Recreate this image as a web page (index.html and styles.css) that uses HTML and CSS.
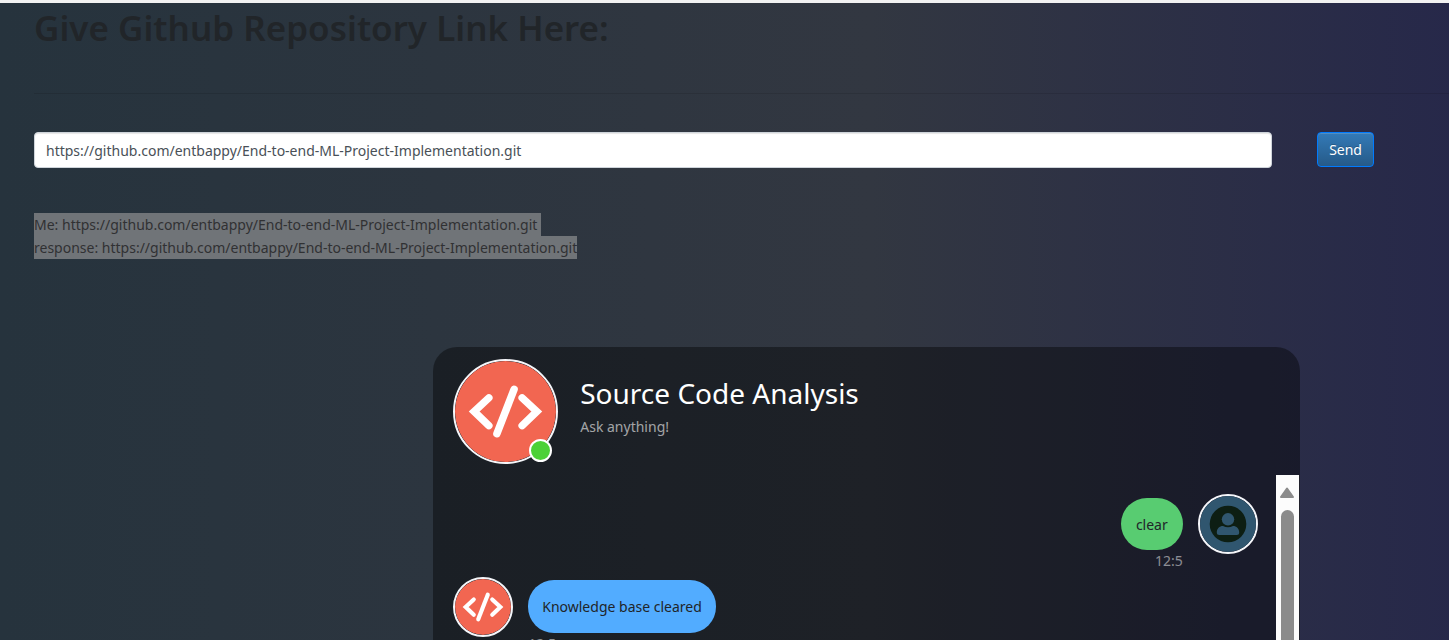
FILE: index.html
```html
<!DOCTYPE html>
<html lang="en">
<head>
<meta charset="utf-8">
<meta name="viewport" content="width=device-width, initial-scale=1">
<title>Source Code Analysis</title>
<link rel="stylesheet" href="styles.css">
</head>
<body>
<svg class="symbols" aria-hidden="true">
  <symbol id="code" viewBox="0 0 100 100">
    <circle cx="50" cy="50" r="50" fill="#f26651"/>
    <g fill="none" stroke="#fff" stroke-width="7.4" stroke-linecap="round">
      <path d="M33.5 36.500 19 50l14.500 14"/>
      <path d="M66.5 36.500 81 50l-14.500 14"/>
      <path d="M58.500 28 41.500 72"/>
    </g>
  </symbol>
</svg>
<main class="page">
  <section class="repo">
    <h1 class="repo-title">Give Github Repository Link Here:</h1>
    <hr class="divider">
    <form class="repo-form">
      <input class="repo-input" type="text" aria-label="Repository link" value="https://github.com/entbappy/End-to-end-ML-Project-Implementation.git">
      <button class="send" type="button">Send</button>
    </form>
    <p class="log"><span class="selected">Me: https://github.com/entbappy/End-to-end-ML-Project-Implementation.git&nbsp;</span><br><span class="selected">response: https://github.com/entbappy/End-to-end-ML-Project-Implementation.git</span></p>
  </section>
  <section class="card">
    <header class="card-header">
      <div class="avatar-wrap">
        <svg class="avatar avatar-large" role="img" aria-label="Source code bot"><use href="#code"/></svg>
        <span class="online"></span>
      </div>
      <div class="heading">
        <h2 class="bot-name">Source Code Analysis</h2>
        <p class="tagline">Ask anything!</p>
      </div>
    </header>
    <div class="card-body">
      <div class="messages">
        <div class="message message-user">
          <div class="content">
            <p class="bubble bubble-user">clear</p>
            <time class="time">12:5</time>
          </div>
          <svg class="avatar" viewBox="0 0 56 56" role="img" aria-label="User">
            <rect width="56" height="56" fill="#30566f"/>
            <circle cx="28" cy="28" r="18.300" fill="#0d1e13"/>
            <circle cx="28" cy="23.300" r="6.200" fill="#30566f"/>
            <path d="M16.800 36.500c0-4 2.700-6.500 6.200-6.500q5 2.500 10 0c3.500 0 6.200 2.500 6.200 6.500q0 2.500-2.500 2.500h-17.400q-2.500 0-2.500-2.500z" fill="#30566f"/>
          </svg>
        </div>
        <div class="message">
          <svg class="avatar" role="img" aria-label="Source code bot"><use href="#code"/></svg>
          <div class="content">
            <p class="bubble bubble-bot">Knowledge base cleared</p>
            <time class="time">12:5</time>
          </div>
        </div>
      </div>
      <div class="scrollbar" aria-hidden="true">
        <svg class="arrow" viewBox="0 0 14 11"><path d="M7 1.500 13 10h-12z" fill="#8b8b8b" stroke="#8b8b8b" stroke-width="2" stroke-linejoin="round"/></svg>
        <div class="thumb"></div>
      </div>
    </div>
  </section>
</main>
</body>
</html>
```
FILE: styles.css
```css
* { box-sizing: border-box; }

body {
  margin: 0;
  height: 100vh;
  overflow: hidden;
  font: 14px/23px "Noto Sans", "Open Sans", sans-serif;
  color: #212529;
  background: linear-gradient(to right, #26333d, #323741 60%, #21214e 120%);
}

h1, h2, p { margin: 0; font-weight: 400; }

.symbols { display: none; }

.page {
  min-height: 100vh;
  border-top: 3px solid #f2f2f2;
}

.repo { padding-left: 34px; }

.repo-title {
  padding: 1px 0 41px;
  font-size: 35px;
  line-height: 48px;
  font-weight: 600;
}

.divider {
  margin: 0;
  border: 0;
  border-top: 1px solid rgba(0, 0, 0, 0.1);
}

.repo-form {
  display: flex;
  align-items: flex-start;
  gap: 45px;
  margin: 38px 75px 45px 0;
}

.repo-input {
  flex: 1;
  min-width: 0;
  height: 36px;
  padding: 6px 11px;
  border: 1px solid #ced4da;
  border-radius: 4px;
  box-shadow: inset 0 1px 1px rgba(0, 0, 0, 0.1);
  background: #fff;
  color: #495057;
  font: inherit;
}

.send {
  height: 35px;
  padding: 0 11px;
  border: 1px solid #007bff;
  border-radius: 4px;
  background: linear-gradient(#337ab7, #265a88);
  box-shadow: inset 0 1px 0 rgba(255, 255, 255, 0.15);
  color: #fff;
  font: inherit;
  text-shadow: 0 -1px 0 rgba(0, 0, 0, 0.2);
}

.selected {
  display: inline-block;
  background: #707478;
  color: #303133;
}

.card {
  margin: 88px 10.3% 0 29.9%;
  overflow: hidden;
  border-radius: 24px;
  background: rgba(0, 0, 0, 0.4);
}

.card-header {
  display: flex;
  gap: 22px;
  height: 128px;
  padding: 12px 20px;
}

.avatar-wrap {
  position: relative;
  height: 105px;
}

.avatar {
  display: block;
  flex: none;
  width: 60px;
  height: 60px;
  border: 2px solid #f5f6fa;
  border-radius: 50%;
}

.avatar-large { width: 105px; height: 105px; }

.online {
  position: absolute;
  right: 6px;
  bottom: 2px;
  width: 23px;
  height: 23px;
  border: 2px solid #fff;
  border-radius: 50%;
  background: #4cd137;
}

.heading { padding-top: 14px; }

.bot-name {
  font-size: 28px;
  line-height: 40px;
  color: #fff;
}

.tagline {
  padding-top: 2px;
  color: rgba(255, 255, 255, 0.6);
}

.card-body {
  display: flex;
  height: 520px;
}

.messages {
  flex: 1;
  padding: 19px 18px 0 20px;
}

.message {
  display: flex;
  gap: 15px;
  height: 83px;
}

.message-user { justify-content: flex-end; }

.content { padding-top: 3px; }

.message-user .content { padding-top: 4px; text-align: right; }

.bubble {
  padding: 15px 14px;
  border-radius: 26px;
}

.bubble-user {
  padding: 15px 15px 14px;
  background: #58cc71;
}

.bubble-bot { background: #52acff; }

.time {
  display: block;
  margin-top: -1px;
  color: rgba(255, 255, 255, 0.5);
}

.scrollbar {
  display: flex;
  flex-direction: column;
  align-items: center;
  gap: 12px;
  width: 24px;
  padding-top: 12px;
  border-right: 1px solid #20212b;
  background: #fcfcfc;
}

.arrow {
  width: 14px;
  height: 11px;
  overflow: visible;
}

.thumb {
  flex: 1;
  width: 13px;
  border-radius: 7px;
  background: #8b8b8b;
}
```
